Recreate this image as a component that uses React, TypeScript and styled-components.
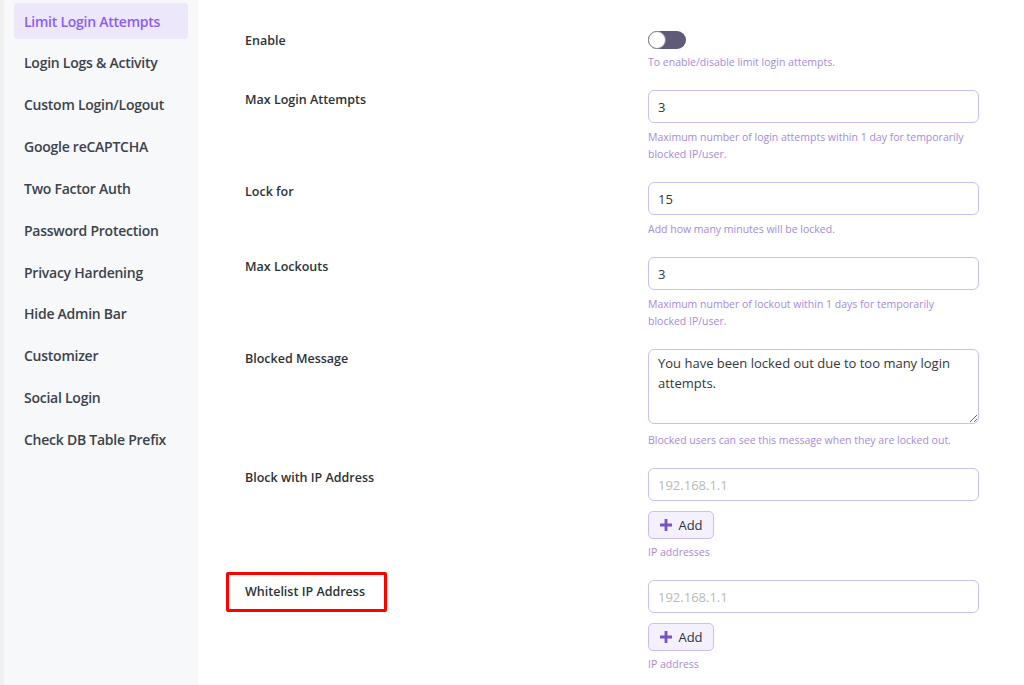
import React from 'react';
import styled, { createGlobalStyle } from 'styled-components';

const GlobalStyle = createGlobalStyle`
  html, body {
    margin: 0;
    padding: 0;
    background: #ffffff;
  }
  * {
    box-sizing: border-box;
  }
  body {
    font-family: "Open Sans", "Noto Sans", sans-serif;
  }
`;

const Page = styled.div`
  display: flex;
  min-height: 100vh;
  width: 100%;
`;

// Left navigation
const Sidebar = styled.nav`
  width: 198px;
  flex-shrink: 0;
  background: #f6f8fa;
  border-left: 4px solid #f0f0f1;
  padding: 3px 10px 0 10px;
  display: flex;
  flex-direction: column;
  gap: 5.85px;
`;

const NavItem = styled.div<{ $active?: boolean }>`
  height: 36px;
  display: flex;
  align-items: center;
  padding-left: 10px;
  border-radius: 4px;
  font-size: 14px;
  font-weight: 600;
  letter-spacing: -0.25px;
  color: ${(p) => (p.$active ? '#8b5cf6' : '#3c434a')};
  background: ${(p) => (p.$active ? '#ede7fb' : 'transparent')};
`;

// Settings area
const Main = styled.main`
  flex: 1;
  background: #ffffff;
  padding: 31px 45px 0 47px;
`;

const Form = styled.div`
  display: flex;
  flex-direction: column;
  gap: 19px;
`;

const Row = styled.div`
  display: grid;
  grid-template-columns: 403px 331px;
  align-items: start;
`;

const Label = styled.div<{ $highlight?: boolean }>`
  font-size: 12.5px;
  font-weight: 600;
  color: #2c3338;
  line-height: 20px;
  ${(p) =>
    p.$highlight &&
    `
    justify-self: start;
    margin: -8px 0 0 -19px;
    padding: 7px 19px 7px 16px;
    border: 3px solid #ff0000;
    border-radius: 2px;
  `}
`;

const Field = styled.div`
  display: flex;
  flex-direction: column;
  align-items: flex-start;
`;

const Help = styled.div<{ $gap?: number }>`
  margin-top: ${(p) => p.$gap ?? 6}px;
  font-size: 10.5px;
  line-height: 17px;
  color: #a78bd8;
`;

const Toggle = styled.div`
  width: 38px;
  height: 18px;
  border-radius: 9px;
  background: #5e5a78;
  display: flex;
  align-items: center;
`;

const Knob = styled.div`
  width: 18px;
  height: 18px;
  border-radius: 50%;
  background: #ffffff;
  border: 1.5px solid #8f8aa5;
`;

const TextInput = styled.input`
  width: 100%;
  height: 33px;
  border: 1px solid #cdbff0;
  border-radius: 6px;
  padding: 0 9px;
  font-family: "Open Sans", "Noto Sans", sans-serif;
  font-size: 13px;
  color: #32373c;
  background: #ffffff;
  outline: none;
  &::placeholder {
    color: #b9b9b9;
  }
`;

const TextArea = styled.textarea`
  width: 100%;
  height: 75px;
  border: 1px solid #cdbff0;
  border-radius: 6px;
  padding: 3px 9px;
  font-family: "Open Sans", "Noto Sans", sans-serif;
  font-size: 13px;
  line-height: 20px;
  color: #32373c;
  background: #ffffff;
  outline: none;
  resize: vertical;
`;

const AddButton = styled.button`
  margin-top: 10px;
  height: 28px;
  width: 66px;
  display: flex;
  align-items: center;
  justify-content: center;
  gap: 5px;
  border: 1px solid #cdbdf2;
  border-radius: 5px;
  background: #f4f0fd;
  font-family: "Open Sans", "Noto Sans", sans-serif;
  font-size: 13px;
  color: #2c3338;
  padding: 0;
`;

const PlusIcon = () => (
  <svg width="14" height="14" viewBox="0 0 14 14">
    <path d="M7 1v12M1 7h12" stroke="#7652c6" strokeWidth="2.8" />
  </svg>
);

const navItems = [
  'Limit Login Attempts',
  'Login Logs & Activity',
  'Custom Login/Logout',
  'Google reCAPTCHA',
  'Two Factor Auth',
  'Password Protection',
  'Privacy Hardening',
  'Hide Admin Bar',
  'Customizer',
  'Social Login',
  'Check DB Table Prefix',
];

const App = () => {
  return (
    <Page>
      <GlobalStyle />
      <Sidebar>
        {navItems.map((item, i) => (
          <NavItem key={item} $active={i === 0}>
            {item}
          </NavItem>
        ))}
      </Sidebar>

      <Main>
        <Form>
          <Row>
            <Label>Enable</Label>
            <Field>
              <Toggle>
                <Knob />
              </Toggle>
              <Help $gap={5}>To enable/disable limit login attempts.</Help>
            </Field>
          </Row>

          <Row>
            <Label>Max Login Attempts</Label>
            <Field>
              <TextInput defaultValue="3" />
              <Help>
                Maximum number of login attempts within 1 day for temporarily
                blocked IP/user.
              </Help>
            </Field>
          </Row>

          <Row>
            <Label>Lock for</Label>
            <Field>
              <TextInput defaultValue="15" />
              <Help>Add how many minutes will be locked.</Help>
            </Field>
          </Row>

          <Row>
            <Label>Max Lockouts</Label>
            <Field>
              <TextInput defaultValue="3" />
              <Help>
                Maximum number of lockout within 1 days for temporarily
                <br />
                blocked IP/user.
              </Help>
            </Field>
          </Row>

          <Row>
            <Label>Blocked Message</Label>
            <Field>
              <TextArea defaultValue="You have been locked out due to too many login attempts." />
              <Help $gap={8}>Blocked users can see this message when they are locked out.</Help>
            </Field>
          </Row>

          <Row>
            <Label>Block with IP Address</Label>
            <Field>
              <TextInput placeholder="192.168.1.1" />
              <AddButton>
                <PlusIcon />
                Add
              </AddButton>
              <Help $gap={5}>IP addresses</Help>
            </Field>
          </Row>

          <Row>
            <Label $highlight>Whitelist IP Address</Label>
            <Field>
              <TextInput placeholder="192.168.1.1" />
              <AddButton>
                <PlusIcon />
                Add
              </AddButton>
              <Help $gap={5}>IP address</Help>
            </Field>
          </Row>
        </Form>
      </Main>
    </Page>
  );
};

export default App;
